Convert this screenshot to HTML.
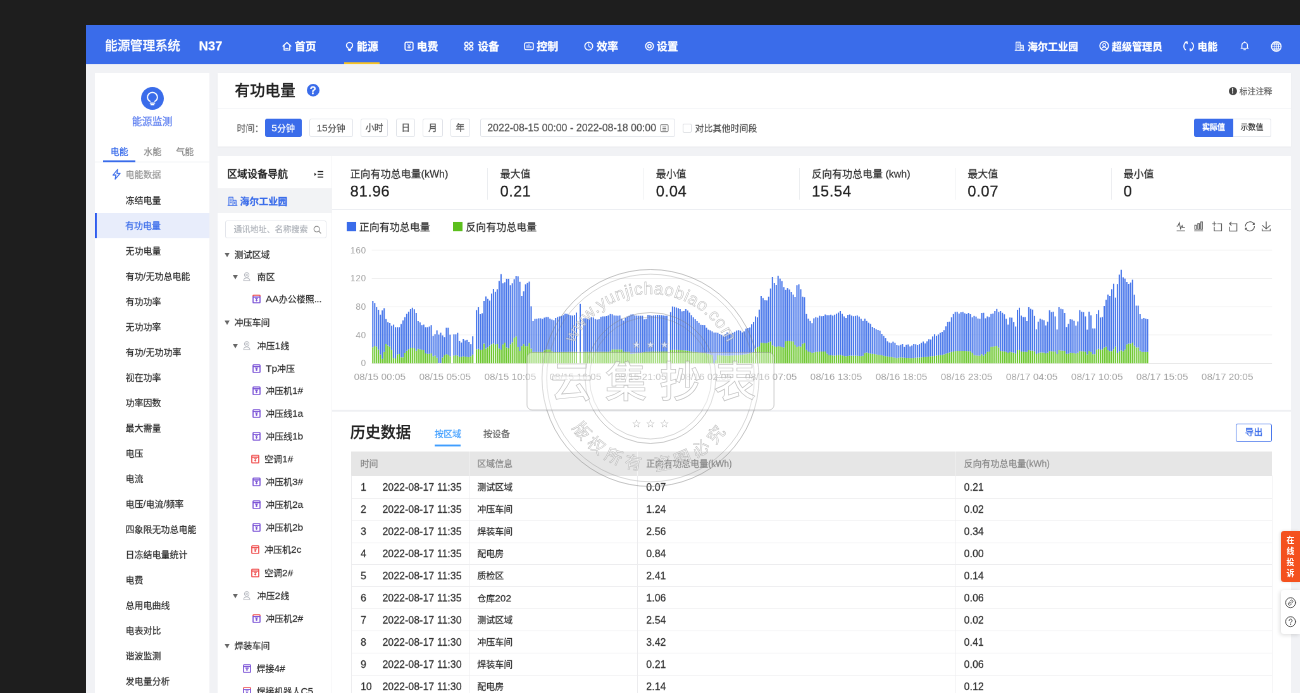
<!DOCTYPE html>
<html lang="zh-CN">
<head>
<meta charset="utf-8">
<title>能源管理系统</title>
<style>
*{box-sizing:border-box;margin:0;padding:0}
html,body{width:1300px;height:693px;overflow:hidden;background:#1e1e1e}
body{font-family:"Liberation Sans","Noto Sans CJK SC",sans-serif;color:#333;position:relative}
#app{position:absolute;left:86px;top:25px;width:1920px;height:1060px;transform:scale(0.6328);transform-origin:0 0;will-change:transform;background:#f1f2f5;overflow:hidden;font-size:14px;-webkit-text-stroke:0.3px currentColor}
.abs{position:absolute}
svg{display:block;overflow:visible}
/* header */
#hd{position:absolute;left:0;top:0;width:1920px;height:61.5px;background:#3a6cea;color:#fff}
#hd .t{position:absolute;top:0;height:61.5px;line-height:69px;white-space:nowrap;font-weight:700;font-size:16px}
#hd .ic{position:absolute}
#hd .logo{font-size:20px;font-weight:500;left:30px;letter-spacing:-0.2px;line-height:66px}
/* sidebar */
#sb{position:absolute;left:14px;top:75.5px;width:181px;height:1000px;background:#fff}
#sb .mi{position:absolute;left:0;width:181px;height:40px;line-height:41px;padding-left:48.5px;font-size:14px;color:#333;white-space:nowrap}
#sb .mi.on{background:#e8edfb;color:#3a6cea;border-left:3.5px solid #2f5cee;padding-left:45px}
/* cards */
.card{position:absolute;background:#fff}
.btn{position:absolute;top:148px;height:28.7px;line-height:27px;border:1px solid #dcdfe6;border-radius:3px;text-align:center;font-size:14px;color:#555;background:#fff;white-space:nowrap}
.btn.on{background:#3a6cea;border-color:#3a6cea;color:#fff}

/* tree */
.tr{position:absolute;height:36px;line-height:36px;font-size:14px;color:#333;white-space:nowrap}
.arrow{position:absolute;width:0;height:0;border-left:4.5px solid transparent;border-right:4.5px solid transparent;border-top:7px solid #666}
/* stats */
.st{position:absolute;top:225.5px;height:50px;padding-left:19px;border-left:1px solid #ebedf0}
.st .l{position:absolute;left:19px;top:-2px;font-size:16px;line-height:24px;color:#333;white-space:nowrap}
.st .v{position:absolute;left:19px;top:22px;font-size:24px;line-height:30px;color:#222;white-space:nowrap;letter-spacing:0.5px}
/* table */
.th{position:absolute;top:674.3px;height:38px;line-height:38px;color:#8a8a8a;font-size:14px;white-space:nowrap}
.td{position:absolute;height:35px;line-height:35px;color:#333;font-size:14px;white-space:nowrap}
.rl{position:absolute;left:419.4px;width:1455px;height:1px;background:#ececee}
.num,.td.num{font-size:16px}
.n2{font-size:15.5px}
.cl{position:absolute;top:674.3px;width:1px;height:400px;background:#ececee}
</style>
</head>
<body>
<div id="app">
<div id="hd">
<div class="t logo">能源管理系统</div>
<div class="t logo" style="left:178.6px;letter-spacing:0;font-weight:700">N37</div>
<div class="ic" style="left:309.7px;top:25.5px"><svg width="15" height="15" viewBox="0 0 15 15" stroke="#fff" fill="none" stroke-width="1.75" stroke-linecap="round" stroke-linejoin="round"><path d="M1.2 7.4L7.5 1.6l6.3 5.8M3 6.2v7.3h9V6.2M5.6 10.8h3.8"/></svg></div>
<div class="t" style="left:329.8px;font-size:17px">首页</div>
<div class="ic" style="left:409.3px;top:25.5px"><svg width="15" height="15" viewBox="0 0 15 15" stroke="#fff" fill="none" stroke-width="1.75" stroke-linecap="round" stroke-linejoin="round"><path d="M5.3 10.6C3.6 9.6 2.7 8.1 2.7 6.3a4.8 4.8 0 0 1 9.6 0c0 1.8-.9 3.3-2.6 4.3M5.6 12.3h3.8M6.2 14h2.6"/></svg></div>
<div class="t" style="left:427.8px;font-size:17px">能源</div>
<div class="ic" style="left:502.5px;top:25.5px"><svg width="15" height="15" viewBox="0 0 15 15" stroke="#fff" fill="none" stroke-width="1.75" stroke-linecap="round" stroke-linejoin="round"><rect x="1.2" y="1.2" width="12.6" height="12.6" rx="2.2"/><path d="M5.2 4l2.3 3 2.3-3M7.5 7v4M5.4 8h4.2M5.4 9.8h4.2" stroke-width="1.2"/></svg></div>
<div class="t" style="left:522.6px;font-size:17px">电费</div>
<div class="ic" style="left:596.9px;top:25.5px"><svg width="16" height="15" viewBox="0 0 16 15" stroke="#fff" fill="none" stroke-width="1.75" stroke-linecap="round" stroke-linejoin="round"><circle cx="4.2" cy="3.9" r="2.7"/><circle cx="11.8" cy="3.9" r="2.7"/><circle cx="4.2" cy="11.1" r="2.7"/><circle cx="11.8" cy="11.1" r="2.7"/></svg></div>
<div class="t" style="left:619.0px;font-size:17px">设备</div>
<div class="ic" style="left:692.2px;top:25.5px"><svg width="16" height="15" viewBox="0 0 16 15" stroke="#fff" fill="none" stroke-width="1.75" stroke-linecap="round" stroke-linejoin="round"><rect x="1.2" y="2" width="13.6" height="11" rx="2.2"/><path d="M5 9.8V6.4M8 9.8V5M11 9.8V7.4" stroke-width="1.3"/></svg></div>
<div class="t" style="left:712.2px;font-size:17px">控制</div>
<div class="ic" style="left:787.0px;top:25.5px"><svg width="15" height="15" viewBox="0 0 15 15" stroke="#fff" fill="none" stroke-width="1.75" stroke-linecap="round" stroke-linejoin="round"><circle cx="7.5" cy="7.5" r="6.2"/><path d="M7.5 3.8v4l2.4 1.6" stroke-width="1.3"/></svg></div>
<div class="t" style="left:807.0px;font-size:17px">效率</div>
<div class="ic" style="left:883.1px;top:25.5px"><svg width="15" height="15" viewBox="0 0 15 15" stroke="#fff" fill="none" stroke-width="1.75" stroke-linecap="round" stroke-linejoin="round"><circle cx="7.5" cy="7.5" r="6.2"/><circle cx="7.5" cy="7.5" r="2.6"/></svg></div>
<div class="t" style="left:901.8px;font-size:17px">设置</div>
<div class="abs" style="left:407.7px;top:58.5px;width:56.1px;height:3px;background:#f7c325"></div>
<div class="ic" style="left:1466.5px;top:24.7px"><svg width="17" height="17" viewBox="0 0 17 17" stroke="#fff" fill="none" stroke-width="1.75" stroke-linecap="round" stroke-linejoin="round"><path d="M2.8 15V2.2h6.4V15M9.2 7.2h5V15M1.2 15h14.6M5 5.2h2M5 8h2M5 10.8h2M11.2 10h1.2M11.2 12.4h1.2" stroke-width="1.3"/></svg></div>
<div class="t" style="left:1488.1px">海尔工业园</div>
<div class="ic" style="left:1600.8px;top:24.7px"><svg width="16" height="16" viewBox="0 0 16 16" stroke="#fff" fill="none" stroke-width="1.75" stroke-linecap="round" stroke-linejoin="round"><circle cx="8" cy="8" r="6.8"/><circle cx="8" cy="6.4" r="2.2" stroke-width="1.3"/><path d="M4 12.6c.8-2 2.2-2.8 4-2.8s3.2.8 4 2.8" stroke-width="1.3"/></svg></div>
<div class="t" style="left:1620.9px">超级管理员</div>
<div class="ic" style="left:1734.4px;top:24.7px"><svg width="19" height="19" viewBox="0 0 17 17" style="margin:-1px 0 0 -1px" stroke="#fff" fill="none" stroke-width="1.75" stroke-linecap="round" stroke-linejoin="round"><path d="M6.2 2.2A6.8 6.8 0 0 0 4 13.6M10.8 14.8A6.8 6.8 0 0 0 13 3.4M6.2 2.2l.2 2.6M6.2 2.2L3.8 3M10.8 14.8l-.2-2.6M10.8 14.8l2.4-.8" stroke-width="1.6"/></svg></div>
<div class="t" style="left:1756.2px">电能</div>
<div class="ic" style="left:1823.8px;top:25.2px"><svg width="14" height="16" viewBox="0 0 14 16" stroke="#fff" fill="none" stroke-width="1.75" stroke-linecap="round" stroke-linejoin="round"><path d="M2.6 11.6V7a4.4 4.4 0 0 1 8.8 0v4.6M1.2 11.8h11.6M5.6 14h2.8M7 1.2v1.4" stroke-width="1.5"/></svg></div>
<div class="ic" style="left:1871.5px;top:24.8px"><svg width="18" height="18" viewBox="0 0 18 18" stroke="#fff" fill="none" stroke-width="1.75" stroke-linecap="round" stroke-linejoin="round"><circle cx="9" cy="9" r="7.6"/><ellipse cx="9" cy="9" rx="3.4" ry="7.6" stroke-width="1.2"/><path d="M1.6 9h14.8M2.6 5.2h12.8M2.6 12.8h12.8M9 1.4v15.2" stroke-width="1.2"/></svg></div>
</div>
<div id="sb">
<div class="abs" style="left:72.9px;top:22.8px;width:36px;height:36px;border-radius:50%;background:#3a6cea"><svg width="36" height="36" viewBox="0 0 36 36" fill="none" stroke="#fff" stroke-width="2" stroke-linecap="round"><path d="M14.2 22.6c-2.6-1.5-4-3.8-4-6.4a7.8 7.8 0 0 1 15.600 0c0 2.600-1.400 4.900-4 6.400M14.600 25.400h6.800M15.800 28h4.400"/></svg></div>
<div class="abs" style="left:0;width:181px;top:65.3px;height:24px;line-height:24px;text-align:center;font-size:16px;color:#5b7df0">能源监测</div>
<div class="abs" style="left:24.7px;top:113.7px;height:22px;line-height:22px;font-size:14px;color:#3a6cea;white-space:nowrap">电能</div>
<div class="abs" style="left:77.2px;top:113.7px;height:22px;line-height:22px;font-size:14px;color:#8c8c8c;white-space:nowrap">水能</div>
<div class="abs" style="left:128.2px;top:113.7px;height:22px;line-height:22px;font-size:14px;color:#8c8c8c;white-space:nowrap">气能</div>
<div class="abs" style="left:0;top:140.0px;width:181px;height:1px;background:#e4e7ed"></div>
<div class="abs" style="left:12.9px;top:138.2px;width:51.5px;height:3px;background:#3a6cea"></div>
<div class="abs" style="left:25.7px;top:151.9px"><svg width="16.500" height="18" viewBox="0 0 14 16" fill="none" stroke="#3a6cea" stroke-width="1.350" stroke-linejoin="round"><path d="M8.600 1.200L2 9h4.200L5 14.800 12 6.600H7.600z"/></svg></div>
<div class="abs" style="left:48.4px;top:148.9px;height:24px;line-height:24px;font-size:14px;color:#999;white-space:nowrap">电能数据</div>
<div class="mi" style="top:181.5px">冻结电量</div>
<div class="mi on" style="top:221.5px">有功电量</div>
<div class="mi" style="top:261.5px">无功电量</div>
<div class="mi" style="top:301.5px">有功/无功总电能</div>
<div class="mi" style="top:341.5px">有功功率</div>
<div class="mi" style="top:381.5px">无功功率</div>
<div class="mi" style="top:421.5px">有功/无功功率</div>
<div class="mi" style="top:461.5px">视在功率</div>
<div class="mi" style="top:501.5px">功率因数</div>
<div class="mi" style="top:541.5px">最大需量</div>
<div class="mi" style="top:581.5px">电压</div>
<div class="mi" style="top:621.5px">电流</div>
<div class="mi" style="top:661.5px">电压/电流/频率</div>
<div class="mi" style="top:701.5px">四象限无功总电能</div>
<div class="mi" style="top:741.5px">日冻结电量统计</div>
<div class="mi" style="top:781.5px">电费</div>
<div class="mi" style="top:821.5px">总用电曲线</div>
<div class="mi" style="top:861.5px">电表对比</div>
<div class="mi" style="top:901.5px">谐波监测</div>
<div class="mi" style="top:941.5px">发电量分析</div>
<div class="mi" style="top:981.5px">光伏发电</div>
</div>
<div class="card" style="left:208.1px;top:75.5px;width:1696.3px;height:116.8px;box-shadow:0 1px 3px rgba(0,0,0,.04)"></div>
<div class="abs" style="left:208.1px;top:132.0px;width:1696.3px;height:1px;background:#eceef2"></div>
<div class="abs" style="left:234.9px;top:86.3px;height:36px;line-height:36px;font-size:24px;font-weight:500;color:#222;white-space:nowrap">有功电量</div>
<div class="abs" style="left:348.7px;top:93.2px;width:20px;height:20px;border-radius:50%;background:#3a6cea;color:#fff;font-weight:700;font-size:17px;line-height:21px;text-align:center">?</div>
<div class="abs" style="left:1805.5px;top:97.5px;width:13px;height:13px;border-radius:50%;background:#444;color:#fff;font-weight:700;font-size:10px;line-height:13px;text-align:center">!</div>
<div class="abs" style="left:1822.4px;top:95.2px;height:20px;line-height:20px;font-size:13px;color:#666;white-space:nowrap">标注注释</div>
<div class="abs" style="left:238.5px;top:151.8px;height:22px;line-height:22px;font-size:14px;color:#666;white-space:nowrap">时间：</div>
<div class="btn on" style="left:282.6px;width:58.0px"><span class="n2">5</span>分钟</div>
<div class="btn" style="left:352.7px;width:68.9px"><span class="n2">15</span>分钟</div>
<div class="btn" style="left:433.6px;width:43.8px">小时</div>
<div class="btn" style="left:490.2px;width:30.2px">日</div>
<div class="btn" style="left:532.4px;width:31.4px">月</div>
<div class="btn" style="left:575.9px;width:30.7px">年</div>
<div class="btn" style="left:622.5px;width:308.2px;text-align:left;padding-left:10.7px;color:#555"><span class="num">2022-08-15 00:00 - 2022-08-18 00:00</span></div>
<div class="abs" style="left:906.6px;top:155.5px"><svg width="14" height="14" viewBox="0 0 14 14" fill="none" stroke="#777" stroke-width="1.1"><rect x="1" y="1.6" width="12" height="11" rx="1.5"/><path d="M4 5h6M4 7.500h6M4 10h6"/></svg></div>
<div class="abs" style="left:943.1px;top:155.5px;width:14px;height:14px;border:1px solid #d0d3d9;border-radius:2px;background:#fff"></div>
<div class="abs" style="left:962.4px;top:151.8px;height:22px;line-height:22px;font-size:14px;color:#555;white-space:nowrap">对比其他时间段</div>
<div class="btn on" style="left:1751.4px;width:61.2px;font-size:12px;font-weight:700;border-radius:3px 0 0 3px">实际值</div>
<div class="btn" style="left:1812.6px;width:60.8px;font-size:12px;border-radius:0 3px 3px 0;border-left:0;color:#333">示数值</div>
<div class="card" style="left:208.1px;top:206.5px;width:179.5px;height:900px"></div>
<div class="card" style="left:388.9px;top:206.5px;width:1515.5px;height:900px"></div>
<div class="abs" style="left:223.1px;top:223.9px;height:24px;line-height:24px;font-size:16px;font-weight:500;color:#222;white-space:nowrap">区域设备导航</div>
<div class="abs" style="left:361.3px;top:230.1px"><svg width="14" height="12" viewBox="0 0 14 12" fill="#222"><path d="M0 3.500l3.200 2.500L0 8.500z"/><rect x="5" y="0.800" width="9" height="1.600"/><rect x="5" y="5.200" width="9" height="1.600"/><rect x="5" y="9.600" width="9" height="1.600"/></svg></div>
<div class="abs" style="left:208.1px;top:257.6px;width:179.5px;height:39.8px;background:#f2f3f5"></div>
<div class="abs" style="left:222.7px;top:269.9px"><svg width="17" height="17" viewBox="0 0 17 17" fill="none" stroke="#3a6cea" stroke-width="1.3" stroke-linecap="round" stroke-linejoin="round"><path d="M2.800 15V2.200h6.400V15M9.200 7.200h5V15M1.200 15h14.600M5 5.200h2M5 8h2M5 10.800h2M11.200 10h1.200M11.200 12.400h1.200"/></svg></div>
<div class="abs" style="left:243.2px;top:267.1px;height:24px;line-height:24px;font-size:15px;font-weight:700;color:#3a6cea;white-space:nowrap">海尔工业园</div>
<div class="abs" style="left:220.3px;top:309.4px;width:159.3px;height:27.2px;border:1px solid #e1e4ea;border-radius:3px;background:#fff;line-height:25.2px;font-size:13px;color:#b0b4bb;padding-left:12.3px;white-space:nowrap">通讯地址、名称搜索</div>
<div class="abs" style="left:358.5px;top:316.7px"><svg width="13" height="13" viewBox="0 0 13 13" fill="none" stroke="#888" stroke-width="1.2" stroke-linecap="round"><circle cx="5.600" cy="5.600" r="4.400"/><path d="M9 9l3 3"/></svg></div>
<div class="arrow" style="left:219.3px;top:360.0px"></div>
<div class="tr" style="left:234.4px;top:345.0px">测试区域</div>
<div class="arrow" style="left:231.9px;top:395.2px"></div>
<div class="abs" style="left:247.1px;top:390.2px"><svg width="14" height="15" viewBox="0 0 14 15" fill="none" stroke="#b5b8bf" stroke-width="1.1"><circle cx="7" cy="5" r="3.600"/><circle cx="7" cy="5" r="1.300"/><path d="M2 13.800c.4-2.600 2.200-4 5-4s4.600 1.400 5 4z"/></svg></div>
<div class="tr" style="left:270.5px;top:380.2px">南区</div>
<div class="abs" style="left:263.1px;top:426.0px"><svg width="13" height="14" viewBox="0 0 13 14" fill="none" stroke-width="1.700"><path d="M1 3.800V1.800a.8.800 0 0 1 .800-.800h9.400a.8.800 0 0 1 .800.800v2" stroke="#ef4d4d"/><path d="M1 3.800v8.400a.8.800 0 0 0 .800.800h9.400a.8.800 0 0 0 .800-.800V3.800z" stroke="#7a52d6"/><path d="M4 6.200h5M6.500 6.200v3.600M5 8.600l1.500 1.500L8 8.600" stroke="#7a52d6" stroke-width="1.300"/></svg></div>
<div class="tr" style="left:284.0px;top:415.0px"><span class="n2">AA</span>办公楼照...</div>
<div class="arrow" style="left:219.3px;top:467.3px"></div>
<div class="tr" style="left:234.4px;top:452.3px">冲压车间</div>
<div class="arrow" style="left:231.9px;top:503.8px"></div>
<div class="abs" style="left:247.1px;top:498.8px"><svg width="14" height="15" viewBox="0 0 14 15" fill="none" stroke="#b5b8bf" stroke-width="1.1"><circle cx="7" cy="5" r="3.600"/><circle cx="7" cy="5" r="1.300"/><path d="M2 13.800c.4-2.600 2.200-4 5-4s4.600 1.400 5 4z"/></svg></div>
<div class="tr" style="left:270.5px;top:488.8px">冲压<span class="n2">1</span>线</div>
<div class="abs" style="left:263.1px;top:535.7px"><svg width="13" height="14" viewBox="0 0 13 14" fill="none" stroke-width="1.700"><path d="M1 3.800V1.800a.8.800 0 0 1 .800-.800h9.400a.8.800 0 0 1 .800.800v2" stroke="#7a52d6"/><path d="M1 3.800v8.400a.8.800 0 0 0 .800.800h9.400a.8.800 0 0 0 .800-.800V3.800z" stroke="#7a52d6"/><path d="M4 6.200h5M6.500 6.200v3.600M5 8.600l1.500 1.500L8 8.600" stroke="#7a52d6" stroke-width="1.300"/></svg></div>
<div class="tr" style="left:284.0px;top:524.7px"><span class="n2">Tp</span>冲压</div>
<div class="abs" style="left:263.1px;top:571.1px"><svg width="13" height="14" viewBox="0 0 13 14" fill="none" stroke-width="1.700"><path d="M1 3.800V1.800a.8.800 0 0 1 .800-.800h9.400a.8.800 0 0 1 .800.800v2" stroke="#7a52d6"/><path d="M1 3.800v8.400a.8.800 0 0 0 .800.800h9.400a.8.800 0 0 0 .800-.800V3.800z" stroke="#7a52d6"/><path d="M4 6.200h5M6.500 6.200v3.600M5 8.600l1.500 1.500L8 8.600" stroke="#7a52d6" stroke-width="1.300"/></svg></div>
<div class="tr" style="left:284.0px;top:560.1px">冲压机<span class="n2">1#</span></div>
<div class="abs" style="left:263.1px;top:606.9px"><svg width="13" height="14" viewBox="0 0 13 14" fill="none" stroke-width="1.700"><path d="M1 3.800V1.800a.8.800 0 0 1 .800-.800h9.400a.8.800 0 0 1 .800.800v2" stroke="#7a52d6"/><path d="M1 3.800v8.400a.8.800 0 0 0 .800.800h9.400a.8.800 0 0 0 .800-.800V3.800z" stroke="#7a52d6"/><path d="M4 6.200h5M6.500 6.200v3.600M5 8.600l1.500 1.500L8 8.600" stroke="#7a52d6" stroke-width="1.300"/></svg></div>
<div class="tr" style="left:284.0px;top:595.9px">冲压线<span class="n2">1a</span></div>
<div class="abs" style="left:263.1px;top:643.1px"><svg width="13" height="14" viewBox="0 0 13 14" fill="none" stroke-width="1.700"><path d="M1 3.800V1.800a.8.800 0 0 1 .800-.800h9.400a.8.800 0 0 1 .800.800v2" stroke="#7a52d6"/><path d="M1 3.800v8.400a.8.800 0 0 0 .800.800h9.400a.8.800 0 0 0 .800-.800V3.800z" stroke="#7a52d6"/><path d="M4 6.200h5M6.500 6.200v3.600M5 8.600l1.500 1.500L8 8.600" stroke="#7a52d6" stroke-width="1.300"/></svg></div>
<div class="tr" style="left:284.0px;top:632.1px">冲压线<span class="n2">1b</span></div>
<div class="abs" style="left:261.2px;top:679.3px"><svg width="13" height="14" viewBox="0 0 13 14" fill="none" stroke-width="1.700"><path d="M1 3.800V1.800a.8.800 0 0 1 .800-.800h9.400a.8.800 0 0 1 .800.800v2" stroke="#ef4d4d"/><path d="M1 3.800v8.400a.8.800 0 0 0 .800.800h9.400a.8.800 0 0 0 .800-.800V3.800z" stroke="#ef4d4d"/><path d="M4 6.200h5M6.500 6.200v3.600M5 8.600l1.500 1.500L8 8.600" stroke="#ef4d4d" stroke-width="1.300"/></svg></div>
<div class="tr" style="left:282.1px;top:668.3px">空调<span class="n2">1#</span></div>
<div class="abs" style="left:263.1px;top:715.0px"><svg width="13" height="14" viewBox="0 0 13 14" fill="none" stroke-width="1.700"><path d="M1 3.800V1.800a.8.800 0 0 1 .800-.800h9.400a.8.800 0 0 1 .800.800v2" stroke="#7a52d6"/><path d="M1 3.800v8.400a.8.800 0 0 0 .800.800h9.400a.8.800 0 0 0 .800-.800V3.800z" stroke="#7a52d6"/><path d="M4 6.200h5M6.500 6.200v3.600M5 8.600l1.500 1.500L8 8.600" stroke="#7a52d6" stroke-width="1.300"/></svg></div>
<div class="tr" style="left:284.0px;top:704.0px">冲压机<span class="n2">3#</span></div>
<div class="abs" style="left:263.1px;top:750.9px"><svg width="13" height="14" viewBox="0 0 13 14" fill="none" stroke-width="1.700"><path d="M1 3.800V1.800a.8.800 0 0 1 .800-.800h9.400a.8.800 0 0 1 .800.800v2" stroke="#7a52d6"/><path d="M1 3.800v8.400a.8.800 0 0 0 .800.800h9.400a.8.800 0 0 0 .800-.800V3.800z" stroke="#7a52d6"/><path d="M4 6.200h5M6.500 6.200v3.600M5 8.600l1.500 1.500L8 8.600" stroke="#7a52d6" stroke-width="1.300"/></svg></div>
<div class="tr" style="left:284.0px;top:739.9px">冲压机<span class="n2">2a</span></div>
<div class="abs" style="left:263.1px;top:786.8px"><svg width="13" height="14" viewBox="0 0 13 14" fill="none" stroke-width="1.700"><path d="M1 3.800V1.800a.8.800 0 0 1 .800-.800h9.400a.8.800 0 0 1 .800.800v2" stroke="#7a52d6"/><path d="M1 3.800v8.400a.8.800 0 0 0 .800.800h9.400a.8.800 0 0 0 .800-.800V3.800z" stroke="#7a52d6"/><path d="M4 6.200h5M6.500 6.200v3.600M5 8.600l1.500 1.500L8 8.600" stroke="#7a52d6" stroke-width="1.300"/></svg></div>
<div class="tr" style="left:284.0px;top:775.8px">冲压机<span class="n2">2b</span></div>
<div class="abs" style="left:261.2px;top:822.3px"><svg width="13" height="14" viewBox="0 0 13 14" fill="none" stroke-width="1.700"><path d="M1 3.800V1.800a.8.800 0 0 1 .800-.800h9.400a.8.800 0 0 1 .800.800v2" stroke="#ef4d4d"/><path d="M1 3.800v8.400a.8.800 0 0 0 .800.800h9.400a.8.800 0 0 0 .800-.800V3.800z" stroke="#ef4d4d"/><path d="M4 6.200h5M6.500 6.200v3.600M5 8.600l1.500 1.500L8 8.600" stroke="#ef4d4d" stroke-width="1.300"/></svg></div>
<div class="tr" style="left:282.1px;top:811.3px">冲压机<span class="n2">2c</span></div>
<div class="abs" style="left:261.2px;top:858.5px"><svg width="13" height="14" viewBox="0 0 13 14" fill="none" stroke-width="1.700"><path d="M1 3.800V1.800a.8.800 0 0 1 .800-.800h9.400a.8.800 0 0 1 .800.800v2" stroke="#ef4d4d"/><path d="M1 3.800v8.400a.8.800 0 0 0 .800.800h9.400a.8.800 0 0 0 .800-.800V3.800z" stroke="#ef4d4d"/><path d="M4 6.200h5M6.500 6.200v3.600M5 8.600l1.500 1.500L8 8.600" stroke="#ef4d4d" stroke-width="1.300"/></svg></div>
<div class="tr" style="left:282.1px;top:847.5px">空调<span class="n2">2#</span></div>
<div class="arrow" style="left:231.9px;top:898.7px"></div>
<div class="abs" style="left:247.1px;top:893.7px"><svg width="14" height="15" viewBox="0 0 14 15" fill="none" stroke="#b5b8bf" stroke-width="1.1"><circle cx="7" cy="5" r="3.600"/><circle cx="7" cy="5" r="1.300"/><path d="M2 13.800c.4-2.600 2.200-4 5-4s4.600 1.400 5 4z"/></svg></div>
<div class="tr" style="left:270.5px;top:883.7px">冲压<span class="n2">2</span>线</div>
<div class="abs" style="left:263.1px;top:930.9px"><svg width="13" height="14" viewBox="0 0 13 14" fill="none" stroke-width="1.700"><path d="M1 3.800V1.800a.8.800 0 0 1 .800-.800h9.400a.8.800 0 0 1 .800.800v2" stroke="#ef4d4d"/><path d="M1 3.800v8.400a.8.800 0 0 0 .800.800h9.400a.8.800 0 0 0 .800-.800V3.800z" stroke="#7a52d6"/><path d="M4 6.200h5M6.500 6.200v3.600M5 8.600l1.500 1.500L8 8.600" stroke="#7a52d6" stroke-width="1.300"/></svg></div>
<div class="tr" style="left:284.0px;top:919.9px">冲压机<span class="n2">2#</span></div>
<div class="arrow" style="left:219.3px;top:978.4px"></div>
<div class="tr" style="left:234.4px;top:963.4px">焊装车间</div>
<div class="abs" style="left:247.6px;top:1010.1px"><svg width="13" height="14" viewBox="0 0 13 14" fill="none" stroke-width="1.700"><path d="M1 3.800V1.800a.8.800 0 0 1 .800-.800h9.400a.8.800 0 0 1 .800.800v2" stroke="#7a52d6"/><path d="M1 3.800v8.400a.8.800 0 0 0 .800.800h9.400a.8.800 0 0 0 .800-.800V3.800z" stroke="#7a52d6"/><path d="M4 6.200h5M6.500 6.200v3.600M5 8.600l1.500 1.500L8 8.600" stroke="#7a52d6" stroke-width="1.300"/></svg></div>
<div class="tr" style="left:269.4px;top:999.1px">焊接<span class="n2">4#</span></div>
<div class="abs" style="left:247.6px;top:1045.9px"><svg width="13" height="14" viewBox="0 0 13 14" fill="none" stroke-width="1.700"><path d="M1 3.800V1.800a.8.800 0 0 1 .800-.800h9.400a.8.800 0 0 1 .800.800v2" stroke="#ef4d4d"/><path d="M1 3.800v8.400a.8.800 0 0 0 .800.800h9.400a.8.800 0 0 0 .800-.800V3.800z" stroke="#7a52d6"/><path d="M4 6.200h5M6.500 6.200v3.600M5 8.600l1.500 1.500L8 8.600" stroke="#7a52d6" stroke-width="1.300"/></svg></div>
<div class="tr" style="left:269.4px;top:1034.9px">焊接机器人<span class="n2">C5</span></div>
<div class="abs" style="left:247.6px;top:1081.8px"><svg width="13" height="14" viewBox="0 0 13 14" fill="none" stroke-width="1.700"><path d="M1 3.800V1.800a.8.800 0 0 1 .800-.800h9.400a.8.800 0 0 1 .800.800v2" stroke="#7a52d6"/><path d="M1 3.800v8.400a.8.800 0 0 0 .800.800h9.400a.8.800 0 0 0 .800-.800V3.800z" stroke="#7a52d6"/><path d="M4 6.200h5M6.500 6.200v3.600M5 8.600l1.500 1.500L8 8.600" stroke="#7a52d6" stroke-width="1.300"/></svg></div>
<div class="tr" style="left:269.4px;top:1070.8px">焊接机器人<span class="n2">C6</span></div>
<div class="st" style="left:398.6px;border-left:0;"><div class="l">正向有功总电量(kWh)</div><div class="v">81.96</div></div>
<div class="st" style="left:634.4px;"><div class="l">最大值</div><div class="v">0.21</div></div>
<div class="st" style="left:880.7px;"><div class="l">最小值</div><div class="v">0.04</div></div>
<div class="st" style="left:1127.0px;"><div class="l">反向有功总电量 (kwh)</div><div class="v">15.54</div></div>
<div class="st" style="left:1373.3px;"><div class="l">最大值</div><div class="v">0.07</div></div>
<div class="st" style="left:1619.5px;"><div class="l">最小值</div><div class="v">0</div></div>
<div class="abs" style="left:388.9px;top:291.2px;width:1515.5px;height:1px;background:#eceef2"></div>
<div class="abs" style="left:411.7px;top:310.8px;width:15px;height:15px;background:#3a6cea"></div>
<div class="abs" style="left:431.7px;top:307.8px;height:24px;line-height:24px;font-size:16px;color:#333;white-space:nowrap">正向有功总电量</div>
<div class="abs" style="left:580.0px;top:310.8px;width:15px;height:15px;background:#5cbf1d"></div>
<div class="abs" style="left:600.3px;top:307.8px;height:24px;line-height:24px;font-size:16px;color:#333;white-space:nowrap">反向有功总电量</div>
<div class="abs" style="left:1722.4px;top:310.4px"><svg width="16" height="16" viewBox="-2 -2 62 62" fill="none" stroke="#555" stroke-width="4.8"><path d="M4.1,28.9h7.1l9.3-22l7.4,38l9.7-19.7l3,12.8h14.9M4.1,58h51.4"/></svg></div>
<div class="abs" style="left:1750.1px;top:310.4px"><svg width="16" height="16" viewBox="-2 -2 62 62" fill="none" stroke="#555" stroke-width="4.8"><path d="M6.7,22.9h10V48h-10V22.9zM24.9,13h10v35h-10V13zM43.2,2h10v46h-10V2zM3.1,58h53.7"/></svg></div>
<div class="abs" style="left:1778.8px;top:310.4px"><svg width="16" height="16" viewBox="-2 -2 62 62" fill="none" stroke="#555" stroke-width="4.8"><path d="M0,13.5h26.9 M13.5,26.9V0 M32.1,13.5H58V58H13.5 V32.1"/></svg></div>
<div class="abs" style="left:1803.9px;top:310.4px"><svg width="16" height="16" viewBox="-2 -2 62 62" fill="none" stroke="#555" stroke-width="4.8"><path d="M22,1.4L9.9,13.5l12.3,12.3 M10.3,13.5H54.9v44.6 H10.3v-26"/></svg></div>
<div class="abs" style="left:1830.7px;top:310.4px"><svg width="16" height="16" viewBox="-2 -2 62 62" fill="none" stroke="#555" stroke-width="4.8"><path d="M47,18.9h9.8V8.7 M56.3,20.1 C52.1,9,40.5,0.6,26.8,2.1C12.6,3.7,1.6,16.2,2.1,30.6 M13,41.1H3.1v10.2 M3.7,39.9c4.2,11.1,15.8,19.5,29.5,18 c14.2-1.6,25.2-14.1,24.7-28.5"/></svg></div>
<div class="abs" style="left:1857.2px;top:310.4px"><svg width="16" height="16" viewBox="-2 -2 62 62" fill="none" stroke="#555" stroke-width="4.8"><path d="M4.7,22.9L29.3,45.5L54.7,23.4M4.6,43.6L4.6,58L53.8,58L53.8,43.6M29.2,45.1L29.2,0"/></svg></div>
<svg class="abs" style="left:0;top:0" width="1920" height="700" viewBox="0 0 1920 700">
<path d="M451.6 534.5H1874.2" stroke="#d9d9d9" stroke-width="1"/>
<text x="443.0" y="539.5" text-anchor="end" font-size="14" fill="#a6a6a6" letter-spacing="0.6">0</text>
<path d="M451.6 489.8H1874.2" stroke="#eeeeee" stroke-width="1"/>
<text x="443.0" y="494.8" text-anchor="end" font-size="14" fill="#a6a6a6" letter-spacing="0.6">40</text>
<path d="M451.6 445.2H1874.2" stroke="#eeeeee" stroke-width="1"/>
<text x="443.0" y="450.2" text-anchor="end" font-size="14" fill="#a6a6a6" letter-spacing="0.6">80</text>
<path d="M451.6 400.5H1874.2" stroke="#eeeeee" stroke-width="1"/>
<text x="443.0" y="405.5" text-anchor="end" font-size="14" fill="#a6a6a6" letter-spacing="0.6">120</text>
<path d="M451.6 355.9H1874.2" stroke="#eeeeee" stroke-width="1"/>
<text x="443.0" y="360.9" text-anchor="end" font-size="14" fill="#a6a6a6" letter-spacing="0.6">160</text>
<path d="M453.3 534.5V509.3M456.3 534.5V507.1M459.2 534.5V508.5M462.2 534.5V512.8M465.2 534.5V520.7M468.2 534.5V527.7M471.2 534.5V516.7M474.1 534.5V504.0M477.1 534.5V506.4M480.1 534.5V508.4M483.1 534.5V513.5M486.1 534.5V526.3M489.0 534.5V526.9M492.0 534.5V520.7M495.0 534.5V520.0M498.0 534.5V525.3M501.0 534.5V525.3M503.9 534.5V518.1M506.9 534.5V514.7M509.9 534.5V512.3M512.9 534.5V510.0M515.8 534.5V509.9M518.8 534.5V511.1M521.8 534.5V514.7M524.8 534.5V511.8M527.8 534.5V512.6M530.7 534.5V513.3M533.7 534.5V513.9M536.7 534.5V519.0M539.7 534.5V519.7M542.7 534.5V519.8M545.6 534.5V518.9M548.6 534.5V523.4M551.6 534.5V522.6M554.6 534.5V525.7M563.5 534.5V525.4M566.5 534.5V521.9M569.5 534.5V520.3M572.4 534.5V521.1M575.4 534.5V523.5M581.4 534.5V522.6M584.4 534.5V522.1M587.3 534.5V522.6M590.3 534.5V524.6M593.3 534.5V524.6M596.3 534.5V523.6M599.3 534.5V523.9M602.2 534.5V524.4M605.2 534.5V525.0M608.2 534.5V523.6M611.2 534.5V520.7M617.1 534.5V512.6M620.1 534.5V511.7M623.1 534.5V513.7M626.1 534.5V513.0M629.0 534.5V503.4M632.0 534.5V511.4M635.0 534.5V509.3M638.0 534.5V506.7M641.0 534.5V504.6M643.9 534.5V503.2M646.9 534.5V504.8M649.9 534.5V504.1M652.9 534.5V511.2M655.9 534.5V512.9M658.8 534.5V504.7M661.8 534.5V501.9M664.8 534.5V509.6M667.8 534.5V511.0M670.7 534.5V504.6M673.7 534.5V501.6M676.7 534.5V494.4M679.7 534.5V492.3M682.7 534.5V508.9M685.6 534.5V514.9M688.6 534.5V507.2M691.6 534.5V504.3M694.6 534.5V507.4M697.6 534.5V507.5M700.5 534.5V502.7M703.5 534.5V511.4M706.5 534.5V516.8M709.5 534.5V516.8M712.4 534.5V516.8M715.4 534.5V516.8M718.4 534.5V516.8M721.4 534.5V516.8M724.4 534.5V514.3M727.3 534.5V512.7M730.3 534.5V512.7M733.3 534.5V512.7M736.3 534.5V515.4M739.3 534.5V517.1M742.2 534.5V517.0M745.2 534.5V516.9M748.2 534.5V516.9M751.2 534.5V516.8M754.2 534.5V516.8M757.1 534.5V516.7M760.1 534.5V516.7M763.1 534.5V516.6M766.1 534.5V516.5M769.0 534.5V516.5M772.0 534.5V516.4M775.0 534.5V516.4M781.0 534.5V516.4M786.9 534.5V516.4M789.9 534.5V516.4M792.9 534.5V516.4M795.9 534.5V516.4M798.8 534.5V516.4M801.8 534.5V516.4M804.8 534.5V516.4M807.8 534.5V516.4M810.7 534.5V516.4M813.7 534.5V516.4M816.7 534.5V516.4M819.7 534.5V516.4M822.7 534.5V516.4M825.6 534.5V516.4M828.6 534.5V515.5M831.6 534.5V512.7M834.6 534.5V512.7M837.6 534.5V512.7M840.5 534.5V512.7M843.5 534.5V512.7M846.5 534.5V512.7M849.5 534.5V515.9M852.5 534.5V516.4M855.4 534.5V516.4M858.4 534.5V516.4M861.4 534.5V519.9M864.4 534.5V519.6M867.3 534.5V519.2M870.3 534.5V518.8M873.3 534.5V518.4M876.3 534.5V518.0M879.3 534.5V517.5M882.2 534.5V517.0M885.2 534.5V516.6M888.2 534.5V516.4M891.2 534.5V516.2M894.2 534.5V516.1M897.1 534.5V516.1M900.1 534.5V516.1M903.1 534.5V516.1M906.1 534.5V516.1M909.1 534.5V516.1M912.0 534.5V516.1M915.0 534.5V516.1M918.0 534.5V515.9M923.9 534.5V514.0M926.9 534.5V513.4M929.9 534.5V513.5M932.9 534.5V513.7M935.9 534.5V513.8M938.8 534.5V513.9M941.8 534.5V514.1M944.8 534.5V514.2M947.8 534.5V514.4M950.8 534.5V514.8M953.7 534.5V515.3M956.7 534.5V515.9M959.7 534.5V516.4M962.7 534.5V516.8M965.6 534.5V517.1M968.6 534.5V517.4M971.6 534.5V517.7M974.6 534.5V518.0M977.6 534.5V518.3M980.5 534.5V519.0M983.5 534.5V519.8M986.5 534.5V520.7M989.5 534.5V521.5M995.4 534.5V529.7M998.4 534.5V521.9M1001.4 534.5V522.1M1004.4 534.5V522.2M1007.4 534.5V522.3M1010.3 534.5V522.4M1013.3 534.5V522.5M1016.3 534.5V522.4M1019.3 534.5V522.3M1022.2 534.5V522.2M1025.2 534.5V522.0M1028.2 534.5V521.9M1031.2 534.5V521.7M1034.2 534.5V521.3M1037.1 534.5V520.9M1040.1 534.5V520.6M1043.1 534.5V520.2M1046.1 534.5V519.4M1049.1 534.5V518.6M1052.0 534.5V517.7M1055.0 534.5V516.9M1058.0 534.5V511.5M1061.0 534.5V509.2M1063.9 534.5V508.1M1066.9 534.5V502.2M1069.9 534.5V502.3M1072.9 534.5V503.1M1075.9 534.5V502.7M1078.8 534.5V501.6M1081.8 534.5V500.2M1084.8 534.5V506.2M1087.8 534.5V507.8M1090.8 534.5V509.1M1093.7 534.5V507.7M1096.7 534.5V508.0M1099.7 534.5V508.9M1102.7 534.5V509.8M1105.7 534.5V499.7M1108.6 534.5V499.0M1111.6 534.5V499.1M1114.6 534.5V499.7M1117.6 534.5V500.2M1120.5 534.5V505.7M1123.5 534.5V509.1M1126.5 534.5V507.7M1129.5 534.5V508.6M1132.5 534.5V503.7M1135.4 534.5V502.5M1138.4 534.5V513.5M1141.4 534.5V515.9M1144.4 534.5V516.9M1147.4 534.5V518.1M1150.3 534.5V517.6M1153.3 534.5V516.7M1156.3 534.5V516.4M1159.3 534.5V516.1M1162.3 534.5V516.1M1165.2 534.5V516.1M1168.2 534.5V516.1M1171.2 534.5V519.6M1174.2 534.5V521.9M1177.1 534.5V522.1M1180.1 534.5V522.3M1183.1 534.5V522.5M1186.1 534.5V522.0M1189.1 534.5V521.6M1192.0 534.5V521.3M1195.0 534.5V522.2M1198.0 534.5V523.0M1201.0 534.5V523.4M1204.0 534.5V523.0M1206.9 534.5V522.5M1209.9 534.5V522.5M1212.9 534.5V522.5M1215.9 534.5V522.5M1218.8 534.5V522.7M1221.8 534.5V523.0M1224.8 534.5V523.3M1227.8 534.5V522.7M1230.8 534.5V518.2M1233.7 534.5V517.6M1236.7 534.5V518.6M1239.7 534.5V519.2M1242.7 534.5V519.7M1245.7 534.5V520.1M1248.6 534.5V520.5M1251.6 534.5V520.9M1254.6 534.5V521.5M1257.6 534.5V522.1M1260.6 534.5V522.7M1263.5 534.5V523.3M1266.5 534.5V523.7M1269.5 534.5V524.2M1272.5 534.5V524.7M1275.4 534.5V525.2M1278.4 534.5V525.7M1281.4 534.5V526.2M1284.4 534.5V525.7M1287.4 534.5V525.3M1290.3 534.5V525.5M1293.3 534.5V525.7M1296.3 534.5V525.9M1299.3 534.5V526.0M1302.3 534.5V526.2M1305.2 534.5V526.2M1308.2 534.5V526.0M1311.2 534.5V525.8M1314.2 534.5V525.6M1317.1 534.5V525.5M1320.1 534.5V525.3M1323.1 534.5V525.0M1326.1 534.5V524.7M1329.1 534.5V524.4M1332.0 534.5V524.0M1335.0 534.5V523.6M1338.0 534.5V523.3M1341.0 534.5V522.9M1344.0 534.5V522.5M1346.9 534.5V522.1M1349.9 534.5V521.7M1352.9 534.5V521.4M1355.9 534.5V520.6M1358.9 534.5V519.4M1361.8 534.5V518.3M1364.8 534.5V517.6M1367.8 534.5V516.8M1370.8 534.5V516.1M1373.7 534.5V515.3M1376.7 534.5V515.0M1379.7 534.5V515.0M1382.7 534.5V515.0M1385.7 534.5V515.0M1388.6 534.5V515.1M1391.6 534.5V515.3M1394.6 534.5V515.5M1397.6 534.5V515.7M1400.6 534.5V518.0M1403.5 534.5V521.6M1406.5 534.5V522.2M1409.5 534.5V522.5M1412.5 534.5V522.7M1415.5 534.5V520.3M1418.4 534.5V522.4M1421.4 534.5V519.7M1424.4 534.5V516.6M1427.4 534.5V516.1M1430.3 534.5V508.8M1433.3 534.5V508.4M1436.3 534.5V507.4M1439.3 534.5V507.0M1442.3 534.5V509.8M1445.2 534.5V515.1M1448.2 534.5V515.5M1451.2 534.5V515.8M1454.2 534.5V516.8M1457.2 534.5V518.1M1460.1 534.5V516.8M1463.1 534.5V517.3M1466.1 534.5V517.8M1469.1 534.5V519.3M1472.0 534.5V514.0M1475.0 534.5V513.8M1478.0 534.5V516.1M1481.0 534.5V516.3M1484.0 534.5V516.5M1486.9 534.5V516.7M1489.9 534.5V514.0M1492.9 534.5V514.4M1495.9 534.5V514.7M1498.9 534.5V515.8M1501.8 534.5V520.0M1504.8 534.5V518.7M1507.8 534.5V517.4M1510.8 534.5V517.6M1513.8 534.5V517.7M1516.7 534.5V518.9M1519.7 534.5V517.8M1522.7 534.5V515.2M1525.7 534.5V515.4M1528.6 534.5V515.7M1531.6 534.5V516.3M1534.6 534.5V519.9M1537.6 534.5V514.0M1540.6 534.5V514.4M1543.5 534.5V514.7M1546.5 534.5V515.0M1549.5 534.5V519.8M1552.5 534.5V519.5M1555.5 534.5V517.7M1558.4 534.5V517.9M1561.4 534.5V518.3M1564.4 534.5V519.2M1567.4 534.5V517.8M1570.4 534.5V515.2M1573.3 534.5V515.4M1576.3 534.5V515.7M1579.3 534.5V516.4M1582.3 534.5V520.6M1585.2 534.5V515.1M1588.2 534.5V516.7M1591.2 534.5V520.3M1594.2 534.5V520.2M1597.2 534.5V513.3M1600.1 534.5V511.7M1603.1 534.5V513.2M1606.1 534.5V512.6M1609.1 534.5V509.8M1612.1 534.5V508.4M1615.0 534.5V514.1M1618.0 534.5V515.6M1621.0 534.5V515.2M1624.0 534.5V512.4M1626.9 534.5V508.4M1629.9 534.5V517.9M1632.9 534.5V515.7M1635.9 534.5V514.3M1638.9 534.5V515.6M1641.8 534.5V512.7M1644.8 534.5V504.7M1647.8 534.5V503.6M1650.8 534.5V503.4M1653.8 534.5V502.0M1656.7 534.5V506.7M1659.7 534.5V509.4M1662.7 534.5V509.5M1665.7 534.5V514.7M1668.7 534.5V516.8M1671.6 534.5V516.8M1674.6 534.5V516.8M1677.6 534.5V516.8" stroke="#6cc72e" stroke-width="2.05" fill="none"/>
<path d="M453.3 509.3V436.1M456.3 507.1V439.2M459.2 508.5V446.0M462.2 512.8V450.0M465.2 520.7V457.8M468.2 527.7V450.9M471.2 516.7V447.5M474.1 504.0V464.7M477.1 506.4V469.4M480.1 508.4V471.1M483.1 513.5V475.3M486.1 526.3V473.6M489.0 526.9V477.5M492.0 520.7V477.6M495.0 520.0V477.6M498.0 525.3V472.6M501.0 525.3V466.7M503.9 518.1V461.7M506.9 514.7V456.4M509.9 512.3V453.0M512.9 510.0V448.9M515.8 509.9V446.7M518.8 511.1V449.3M521.8 514.7V455.1M524.8 511.8V467.9M527.8 512.6V469.9M530.7 513.3V474.3M533.7 513.9V473.6M536.7 519.0V477.5M539.7 519.7V477.6M542.7 519.8V476.5M545.6 518.9V474.3M548.6 523.4V491.3M551.6 522.6V488.5M554.6 525.7V482.6M557.5 534.1V489.2M560.5 534.1V486.2M563.5 525.4V490.4M566.5 521.9V493.2M569.5 520.3V478.6M572.4 521.1V478.6M575.4 523.5V489.5M581.4 522.6V488.8M584.4 522.1V488.8M587.3 522.6V486.4M590.3 524.6V498.9M593.3 524.6V501.8M596.3 523.6V496.1M599.3 523.9V498.4M602.2 524.4V497.8M605.2 525.0V501.1M608.2 523.6V504.2M611.2 520.7V492.1M617.1 512.6V450.6M620.1 511.7V446.1M623.1 513.7V457.0M626.1 513.0V455.6M629.0 503.4V436.0M632.0 511.4V429.1M635.0 509.3V432.7M638.0 506.7V435.5M641.0 504.6V424.5M643.9 503.2V417.1M646.9 504.8V421.7M649.9 504.1V417.5M652.9 511.2V404.6M655.9 512.9V393.8M658.8 504.7V408.2M661.8 501.9V406.6M664.8 509.6V401.0M667.8 511.0V401.0M670.7 504.6V411.2M673.7 501.6V408.3M676.7 494.4V401.8M679.7 492.3V397.1M682.7 508.9V397.3M685.6 514.9V405.8M688.6 507.2V427.9M691.6 504.3V420.7M694.6 507.4V409.7M697.6 507.5V407.8M700.5 502.7V405.4M703.5 511.4V444.4M706.5 516.8V468.0M709.5 516.8V464.6M712.4 516.8V464.2M715.4 516.8V463.4M718.4 516.8V463.6M721.4 516.8V464.5M724.4 514.3V462.5M727.3 512.7V461.6M730.3 512.7V461.6M733.3 512.7V464.1M736.3 515.4V465.6M739.3 517.1V466.4M742.2 517.0V462.9M745.2 516.9V461.5M748.2 516.9V460.5M751.2 516.8V459.9M754.2 516.8V458.6M757.1 516.7V456.2M760.1 516.7V456.5M763.1 516.6V457.8M766.1 516.5V458.8M769.0 516.5V459.3M772.0 516.4V458.3M775.0 516.4V454.4M781.0 516.4V440.7M786.9 516.4V463.5M789.9 516.4V463.5M792.9 516.4V464.7M795.9 516.4V462.9M798.8 516.4V461.8M801.8 516.4V462.2M804.8 516.4V464.8M807.8 516.4V465.4M810.7 516.4V465.0M813.7 516.4V461.2M816.7 516.4V460.6M819.7 516.4V460.5M822.7 516.4V459.9M825.6 516.4V458.7M828.6 515.5V456.8M831.6 512.7V457.3M834.6 512.7V458.9M837.6 512.7V459.3M840.5 512.7V459.5M843.5 512.7V459.1M846.5 512.7V463.9M849.5 515.9V467.3M852.5 516.4V462.9M855.4 516.4V460.8M858.4 516.4V459.6M861.4 519.9V457.4M864.4 519.6V457.2M867.3 519.2V459.0M870.3 518.8V459.3M873.3 518.4V459.6M876.3 518.0V459.6M879.3 517.5V459.6M882.2 517.0V465.2M885.2 516.6V464.6M888.2 516.4V458.1M891.2 516.2V458.4M894.2 516.1V459.5M897.1 516.1V459.0M900.1 516.1V458.5M903.1 516.1V458.0M906.1 516.1V458.2M909.1 516.1V458.6M912.0 516.1V459.0M915.0 516.1V459.5M918.0 515.9V459.6M923.9 514.0V453.8M926.9 513.4V444.8M929.9 513.5V445.6M932.9 513.7V446.5M935.9 513.8V447.4M938.8 513.9V449.0M941.8 514.1V452.4M944.8 514.2V452.0M947.8 514.4V449.1M950.8 514.8V451.3M953.7 515.3V454.4M956.7 515.9V458.4M959.7 516.4V461.9M962.7 516.8V464.9M965.6 517.1V467.9M968.6 517.4V470.8M971.6 517.7V473.8M974.6 518.0V473.9M977.6 518.3V474.2M980.5 519.0V478.6M983.5 519.8V481.5M986.5 520.7V482.4M989.5 521.5V484.2M992.5 534.5V486.1M995.4 529.7V486.1M998.4 521.9V486.5M1001.4 522.1V487.9M1004.4 522.2V489.7M1007.4 522.3V491.7M1010.3 522.4V488.6M1013.3 522.5V485.7M1016.3 522.4V487.5M1019.3 522.3V487.9M1022.2 522.2V486.5M1025.2 522.0V484.7M1028.2 521.9V482.7M1031.2 521.7V482.3M1034.2 521.3V482.9M1037.1 520.9V485.7M1040.1 520.6V484.2M1043.1 520.2V479.8M1046.1 519.4V479.0M1049.1 518.6V477.9M1052.0 517.7V473.1M1055.0 516.9V468.9M1058.0 511.5V460.6M1061.0 509.2V461.9M1063.9 508.1V449.8M1066.9 502.2V428.0M1069.9 502.3V431.5M1072.9 503.1V435.1M1075.9 502.7V435.3M1078.8 501.6V429.5M1081.8 500.2V416.6M1084.8 506.2V398.1M1087.8 507.8V407.9M1090.8 509.1V410.9M1093.7 507.7V396.5M1096.7 508.0V400.7M1099.7 508.9V404.7M1102.7 509.8V414.2M1105.7 499.7V418.7M1108.6 499.0V416.0M1111.6 499.1V417.9M1114.6 499.7V422.1M1117.6 500.2V425.9M1120.5 505.7V430.1M1123.5 509.1V411.2M1126.5 507.7V409.7M1129.5 508.6V417.4M1132.5 503.7V429.4M1135.4 502.5V430.3M1138.4 513.5V456.7M1141.4 515.9V464.0M1144.4 516.9V467.7M1147.4 518.1V471.3M1150.3 517.6V463.6M1153.3 516.7V461.7M1156.3 516.4V462.5M1159.3 516.1V459.6M1162.3 516.1V460.2M1165.2 516.1V459.9M1168.2 516.1V457.6M1171.2 519.6V458.6M1174.2 521.9V458.6M1177.1 522.1V457.8M1180.1 522.3V459.3M1183.1 522.5V457.7M1186.1 522.0V456.3M1189.1 521.6V454.6M1192.0 521.3V451.9M1195.0 522.2V456.4M1198.0 523.0V460.6M1201.0 523.4V462.9M1204.0 523.0V458.1M1206.9 522.5V457.6M1209.9 522.5V459.3M1212.9 522.5V460.3M1215.9 522.5V459.8M1218.8 522.7V459.0M1221.8 523.0V460.8M1224.8 523.3V464.3M1227.8 522.7V467.8M1230.8 518.2V464.1M1233.7 517.6V467.8M1236.7 518.6V470.5M1239.7 519.2V472.2M1242.7 519.7V477.1M1245.7 520.1V479.1M1248.6 520.5V480.7M1251.6 520.9V482.1M1254.6 521.5V482.9M1257.6 522.1V488.0M1260.6 522.7V491.3M1263.5 523.3V494.9M1266.5 523.7V499.8M1269.5 524.2V501.8M1272.5 524.7V502.5M1275.4 525.2V500.5M1278.4 525.7V502.2M1281.4 526.2V506.1M1284.4 525.7V506.5M1287.4 525.3V505.5M1290.3 525.5V504.1M1293.3 525.7V508.7M1296.3 525.9V505.4M1299.3 526.0V504.7M1302.3 526.2V507.9M1305.2 526.2V506.4M1308.2 526.0V504.1M1311.2 525.8V504.6M1314.2 525.6V506.1M1317.1 525.5V504.2M1320.1 525.3V502.2M1323.1 525.0V500.2M1326.1 524.7V503.2M1329.1 524.4V500.1M1332.0 524.0V496.5M1335.0 523.6V496.9M1338.0 523.3V492.2M1341.0 522.9V488.5M1344.0 522.5V491.0M1346.9 522.1V488.9M1349.9 521.7V486.5M1352.9 521.4V485.1M1355.9 520.6V482.2M1358.9 519.4V476.2M1361.8 518.3V469.1M1364.8 517.6V468.7M1367.8 516.8V462.1M1370.8 516.1V456.7M1373.7 515.3V453.6M1376.7 515.0V453.2M1379.7 515.0V455.9M1382.7 515.0V454.1M1385.7 515.0V453.6M1388.6 515.1V455.6M1391.6 515.3V456.8M1394.6 515.5V455.1M1397.6 515.7V456.9M1400.6 518.0V462.1M1403.5 521.6V459.8M1406.5 522.2V460.8M1409.5 522.5V463.8M1412.5 522.7V464.3M1415.5 520.3V454.9M1418.4 522.4V454.8M1421.4 519.7V463.4M1424.4 516.6V460.6M1427.4 516.1V461.5M1430.3 508.8V456.7M1433.3 508.4V455.9M1436.3 507.4V451.9M1439.3 507.0V448.7M1442.3 509.8V453.5M1445.2 515.1V452.1M1448.2 515.5V454.7M1451.2 515.8V457.3M1454.2 516.8V464.2M1457.2 518.1V473.4M1460.1 516.8V462.2M1463.1 517.3V462.6M1466.1 517.8V469.2M1469.1 519.3V476.6M1472.0 514.0V449.9M1475.0 513.8V446.8M1478.0 516.1V459.2M1481.0 516.3V461.6M1484.0 516.5V461.6M1486.9 516.7V467.9M1489.9 514.0V446.0M1492.9 514.4V448.6M1495.9 514.7V449.8M1498.9 515.8V459.7M1501.8 520.0V480.9M1504.8 518.7V468.7M1507.8 517.4V464.1M1510.8 517.6V465.6M1513.8 517.7V466.5M1516.7 518.9V474.8M1519.7 517.8V468.7M1522.7 515.2V450.7M1525.7 515.4V453.8M1528.6 515.7V453.1M1531.6 516.3V460.4M1534.6 519.9V481.3M1537.6 514.0V446.0M1540.6 514.4V448.4M1543.5 514.7V449.3M1546.5 515.0V455.0M1549.5 519.8V477.2M1552.5 519.5V472.3M1555.5 517.7V465.0M1558.4 517.9V465.6M1561.4 518.3V467.5M1564.4 519.2V475.0M1567.4 517.8V468.6M1570.4 515.2V450.6M1573.3 515.4V453.1M1576.3 515.7V453.8M1579.3 516.4V460.5M1582.3 520.6V481.4M1585.2 515.1V452.9M1588.2 516.7V458.8M1591.2 520.3V479.6M1594.2 520.2V479.5M1597.2 513.3V457.0M1600.1 511.7V450.4M1603.1 513.2V462.2M1606.1 512.6V461.6M1609.1 509.8V444.0M1612.1 508.4V434.2M1615.0 514.1V426.1M1618.0 515.6V428.0M1621.0 515.2V417.6M1624.0 512.4V408.8M1626.9 508.4V430.8M1629.9 517.9V409.2M1632.9 515.7V394.4M1635.9 514.3V386.7M1638.9 515.6V398.8M1641.8 512.7V400.8M1644.8 504.7V405.9M1647.8 503.6V409.0M1650.8 503.4V407.1M1653.8 502.0V402.5M1656.7 506.7V426.2M1659.7 509.4V443.6M1662.7 509.5V443.6M1665.7 514.7V457.1M1668.7 516.8V464.6M1671.6 516.8V463.1M1674.6 516.8V463.9M1677.6 516.8V465.0" stroke="#4776ea" stroke-width="2.05" fill="none"/>
<text x="464.3" y="561.5" text-anchor="middle" font-size="15.5" fill="#a6a6a6">08/15 00:05</text>
<text x="567.3" y="561.5" text-anchor="middle" font-size="15.5" fill="#a6a6a6">08/15 05:05</text>
<text x="670.4" y="561.5" text-anchor="middle" font-size="15.5" fill="#a6a6a6">08/15 10:05</text>
<text x="773.4" y="561.5" text-anchor="middle" font-size="15.5" fill="#a6a6a6">08/15 16:05</text>
<text x="876.4" y="561.5" text-anchor="middle" font-size="15.5" fill="#a6a6a6">08/15 21:05</text>
<text x="979.5" y="561.5" text-anchor="middle" font-size="15.5" fill="#a6a6a6">08/16 02:05</text>
<text x="1082.5" y="561.5" text-anchor="middle" font-size="15.5" fill="#a6a6a6">08/16 07:05</text>
<text x="1185.5" y="561.5" text-anchor="middle" font-size="15.5" fill="#a6a6a6">08/16 13:05</text>
<text x="1288.6" y="561.5" text-anchor="middle" font-size="15.5" fill="#a6a6a6">08/16 18:05</text>
<text x="1391.6" y="561.5" text-anchor="middle" font-size="15.5" fill="#a6a6a6">08/16 23:05</text>
<text x="1494.6" y="561.5" text-anchor="middle" font-size="15.5" fill="#a6a6a6">08/17 04:05</text>
<text x="1597.7" y="561.5" text-anchor="middle" font-size="15.5" fill="#a6a6a6">08/17 10:05</text>
<text x="1700.7" y="561.5" text-anchor="middle" font-size="15.5" fill="#a6a6a6">08/17 15:05</text>
<text x="1803.7" y="561.5" text-anchor="middle" font-size="15.5" fill="#a6a6a6">08/17 20:05</text>
</svg>
<div class="abs" style="left:388.9px;top:608.2px;width:1515.5px;height:3.2px;background:#eff0f3"></div>
<div class="abs" style="left:417.6px;top:626.0px;height:36px;line-height:36px;font-size:24px;font-weight:500;color:#222;white-space:nowrap">历史数据</div>
<div class="abs" style="left:550.9px;top:634.9px;height:22px;line-height:22px;font-size:14px;color:#409eff;white-space:nowrap">按区域</div>
<div class="abs" style="left:550.6px;top:662.6px;width:41.7px;height:3px;background:#409eff"></div>
<div class="abs" style="left:628.0px;top:634.9px;height:22px;line-height:22px;font-size:14px;color:#666;white-space:nowrap">按设备</div>
<div class="abs" style="left:1816.7px;top:629.7px;width:57.8px;height:28.9px;border:1.5px solid #3a6cea;border-radius:3px;color:#3a6cea;font-size:14px;line-height:25.9px;text-align:center;background:#fff">导出</div>
<div class="abs" style="left:419.4px;top:674.3px;width:1454.8px;height:38.7px;background:#e6e6e6"></div>
<div class="abs" style="left:604.6px;top:674.3px;width:1px;height:38.1px;background:#f3f3f3"></div>
<div class="abs" style="left:871.0px;top:674.3px;width:1px;height:38.1px;background:#f3f3f3"></div>
<div class="abs" style="left:1372.8px;top:674.3px;width:1px;height:38.1px;background:#f3f3f3"></div>
<div class="th" style="left:433.5px">时间</div>
<div class="th" style="left:618.2px">区域信息</div>
<div class="th" style="left:885.3px">正向有功总电量(kWh)</div>
<div class="th" style="left:1387.6px">反向有功总电量(kWh)</div>
<div class="td num" style="left:433.9px;top:713.2px">1</div>
<div class="td num" style="left:468.4px;top:713.2px">2022-08-17 11:35</div>
<div class="td" style="left:618.2px;top:713.2px">测试区域</div>
<div class="td num" style="left:885.3px;top:713.2px">0.07</div>
<div class="td num" style="left:1387.6px;top:713.2px">0.21</div>
<div class="rl" style="top:747.6px"></div>
<div class="td num" style="left:433.9px;top:748.1px">2</div>
<div class="td num" style="left:468.4px;top:748.1px">2022-08-17 11:35</div>
<div class="td" style="left:618.2px;top:748.1px">冲压车间</div>
<div class="td num" style="left:885.3px;top:748.1px">1.24</div>
<div class="td num" style="left:1387.6px;top:748.1px">0.02</div>
<div class="rl" style="top:782.6px"></div>
<div class="td num" style="left:433.9px;top:783.1px">3</div>
<div class="td num" style="left:468.4px;top:783.1px">2022-08-17 11:35</div>
<div class="td" style="left:618.2px;top:783.1px">焊装车间</div>
<div class="td num" style="left:885.3px;top:783.1px">2.56</div>
<div class="td num" style="left:1387.6px;top:783.1px">0.34</div>
<div class="rl" style="top:817.5px"></div>
<div class="td num" style="left:433.9px;top:818.0px">4</div>
<div class="td num" style="left:468.4px;top:818.0px">2022-08-17 11:35</div>
<div class="td" style="left:618.2px;top:818.0px">配电房</div>
<div class="td num" style="left:885.3px;top:818.0px">0.84</div>
<div class="td num" style="left:1387.6px;top:818.0px">0.00</div>
<div class="rl" style="top:852.4px"></div>
<div class="td num" style="left:433.9px;top:852.9px">5</div>
<div class="td num" style="left:468.4px;top:852.9px">2022-08-17 11:35</div>
<div class="td" style="left:618.2px;top:852.9px">质检区</div>
<div class="td num" style="left:885.3px;top:852.9px">2.41</div>
<div class="td num" style="left:1387.6px;top:852.9px">0.14</div>
<div class="rl" style="top:887.3px"></div>
<div class="td num" style="left:433.9px;top:887.8px">6</div>
<div class="td num" style="left:468.4px;top:887.8px">2022-08-17 11:35</div>
<div class="td" style="left:618.2px;top:887.8px">仓库<span class="n2">202</span></div>
<div class="td num" style="left:885.3px;top:887.8px">1.06</div>
<div class="td num" style="left:1387.6px;top:887.8px">0.06</div>
<div class="rl" style="top:922.3px"></div>
<div class="td num" style="left:433.9px;top:922.8px">7</div>
<div class="td num" style="left:468.4px;top:922.8px">2022-08-17 11:30</div>
<div class="td" style="left:618.2px;top:922.8px">测试区域</div>
<div class="td num" style="left:885.3px;top:922.8px">2.54</div>
<div class="td num" style="left:1387.6px;top:922.8px">0.02</div>
<div class="rl" style="top:957.2px"></div>
<div class="td num" style="left:433.9px;top:957.7px">8</div>
<div class="td num" style="left:468.4px;top:957.7px">2022-08-17 11:30</div>
<div class="td" style="left:618.2px;top:957.7px">冲压车间</div>
<div class="td num" style="left:885.3px;top:957.7px">3.42</div>
<div class="td num" style="left:1387.6px;top:957.7px">0.41</div>
<div class="rl" style="top:992.1px"></div>
<div class="td num" style="left:433.9px;top:992.6px">9</div>
<div class="td num" style="left:468.4px;top:992.6px">2022-08-17 11:30</div>
<div class="td" style="left:618.2px;top:992.6px">焊装车间</div>
<div class="td num" style="left:885.3px;top:992.6px">0.21</div>
<div class="td num" style="left:1387.6px;top:992.6px">0.06</div>
<div class="rl" style="top:1027.0px"></div>
<div class="td num" style="left:433.9px;top:1027.5px">10</div>
<div class="td num" style="left:468.4px;top:1027.5px">2022-08-17 11:30</div>
<div class="td" style="left:618.2px;top:1027.5px">配电房</div>
<div class="td num" style="left:885.3px;top:1027.5px">2.14</div>
<div class="td num" style="left:1387.6px;top:1027.5px">0.12</div>
<div class="rl" style="top:1062.0px"></div>
<div class="td num" style="left:433.9px;top:1062.5px">11</div>
<div class="td num" style="left:468.4px;top:1062.5px">2022-08-17 11:30</div>
<div class="td" style="left:618.2px;top:1062.5px">质检区</div>
<div class="td num" style="left:885.3px;top:1062.5px">1.87</div>
<div class="td num" style="left:1387.6px;top:1062.5px">0.09</div>
<div class="rl" style="top:1096.9px"></div>
<div class="cl" style="left:419.4px;top:712.4px"></div>
<div class="cl" style="left:604.6px;top:712.4px"></div>
<div class="cl" style="left:871.0px;top:712.4px"></div>
<div class="cl" style="left:1372.8px;top:712.4px"></div>
<div class="cl" style="left:1873.6px;top:712.4px"></div>
</div>
<div style="position:absolute;left:1281px;top:531px;width:19px;height:51px;background:#f4511e;border-radius:3px 0 0 3px;color:#fff;font-weight:700;font-size:7.9px;line-height:10.8px;text-align:center;padding-top:5.400px;box-shadow:-1px 0 3px rgba(0,0,0,.12)">在<br>线<br>投<br>诉</div><div style="position:absolute;left:1281px;top:590px;width:19px;height:44px;background:#fff;border-radius:3px 0 0 3px;box-shadow:-1px 1px 4px rgba(0,0,0,.14)"><svg width="19" height="44" viewBox="0 0 19 44" fill="none" stroke="#555" stroke-width="0.9" stroke-linecap="round"><circle cx="9.600" cy="12.700" r="5"/><path d="M8.700 13.600l1.800-1.800M8.400 12.300l-.7.700a1.300 1.300 0 0 0 1.900 1.900l.7-.7M10.800 13.100l.7-.7a1.300 1.300 0 0 0-1.900-1.900l-.7.700" stroke-width="0.800"/><circle cx="9.600" cy="31.700" r="5"/><path d="M8.100 30.600a1.500 1.500 0 1 1 2.200 1.300c-.5.300-.7.600-.7 1.100M9.600 34.300v.3" stroke-width="0.900"/></svg></div>
<svg style="position:absolute;left:0;top:0;pointer-events:none" width="1300" height="693" viewBox="0 0 1300 693" font-family="Liberation Sans,Noto Sans CJK SC,sans-serif">
<g fill="none" stroke="#7d7d7d" stroke-opacity="0.5">
<circle cx="650.5" cy="378.0" r="108.500" stroke-width="0.9"/><circle cx="650.5" cy="378.0" r="103.800" stroke-width="0.6"/>
<circle cx="650.5" cy="378.0" r="65.500" stroke-width="0.8"/><circle cx="650.5" cy="378.0" r="61" stroke-width="0.6"/>
</g>
<defs><path id="wa" d="M566.5 378.0A84 84 0 0 1 734.5 378.0"/><path id="wb" d="M558.0 378.0A92.5 92.5 0 0 0 743.0 378.0"/></defs>
<text font-size="17" fill="#fff" fill-opacity="0.55" stroke="#808080" stroke-opacity="0.5" stroke-width="0.5" letter-spacing="0.5"><textPath href="#wa" startOffset="50%" text-anchor="middle">www.yunjichaobiao.com</textPath></text>
<text font-size="17" fill="#fff" fill-opacity="0.55" stroke="#808080" stroke-opacity="0.5" stroke-width="0.5" letter-spacing="5"><textPath href="#wb" startOffset="50%" text-anchor="middle">版权所有 盗图必究</textPath></text>
<text x="653.5" y="346.6" text-anchor="middle" font-size="8" fill="#fff" fill-opacity="0.7" stroke="#808080" stroke-opacity="0.5" stroke-width="0.4" letter-spacing="6">★★★</text>
<text x="653.5" y="425.8" text-anchor="middle" font-size="8" fill="#fff" fill-opacity="0.7" stroke="#808080" stroke-opacity="0.5" stroke-width="0.4" letter-spacing="6">★★★</text>
<rect x="527" y="352.500" width="247" height="57.500" rx="5" fill="#fff" fill-opacity="0.38" stroke="#8c8c8c" stroke-opacity="0.45" stroke-width="0.9"/>
<text x="659.600" y="396.800" text-anchor="middle" font-size="42" font-weight="500" fill="#fff" fill-opacity="0.6" stroke="#8c8c8c" stroke-opacity="0.5" stroke-width="0.7" letter-spacing="12.500">云集抄表</text>
</svg>
</body>
</html>
